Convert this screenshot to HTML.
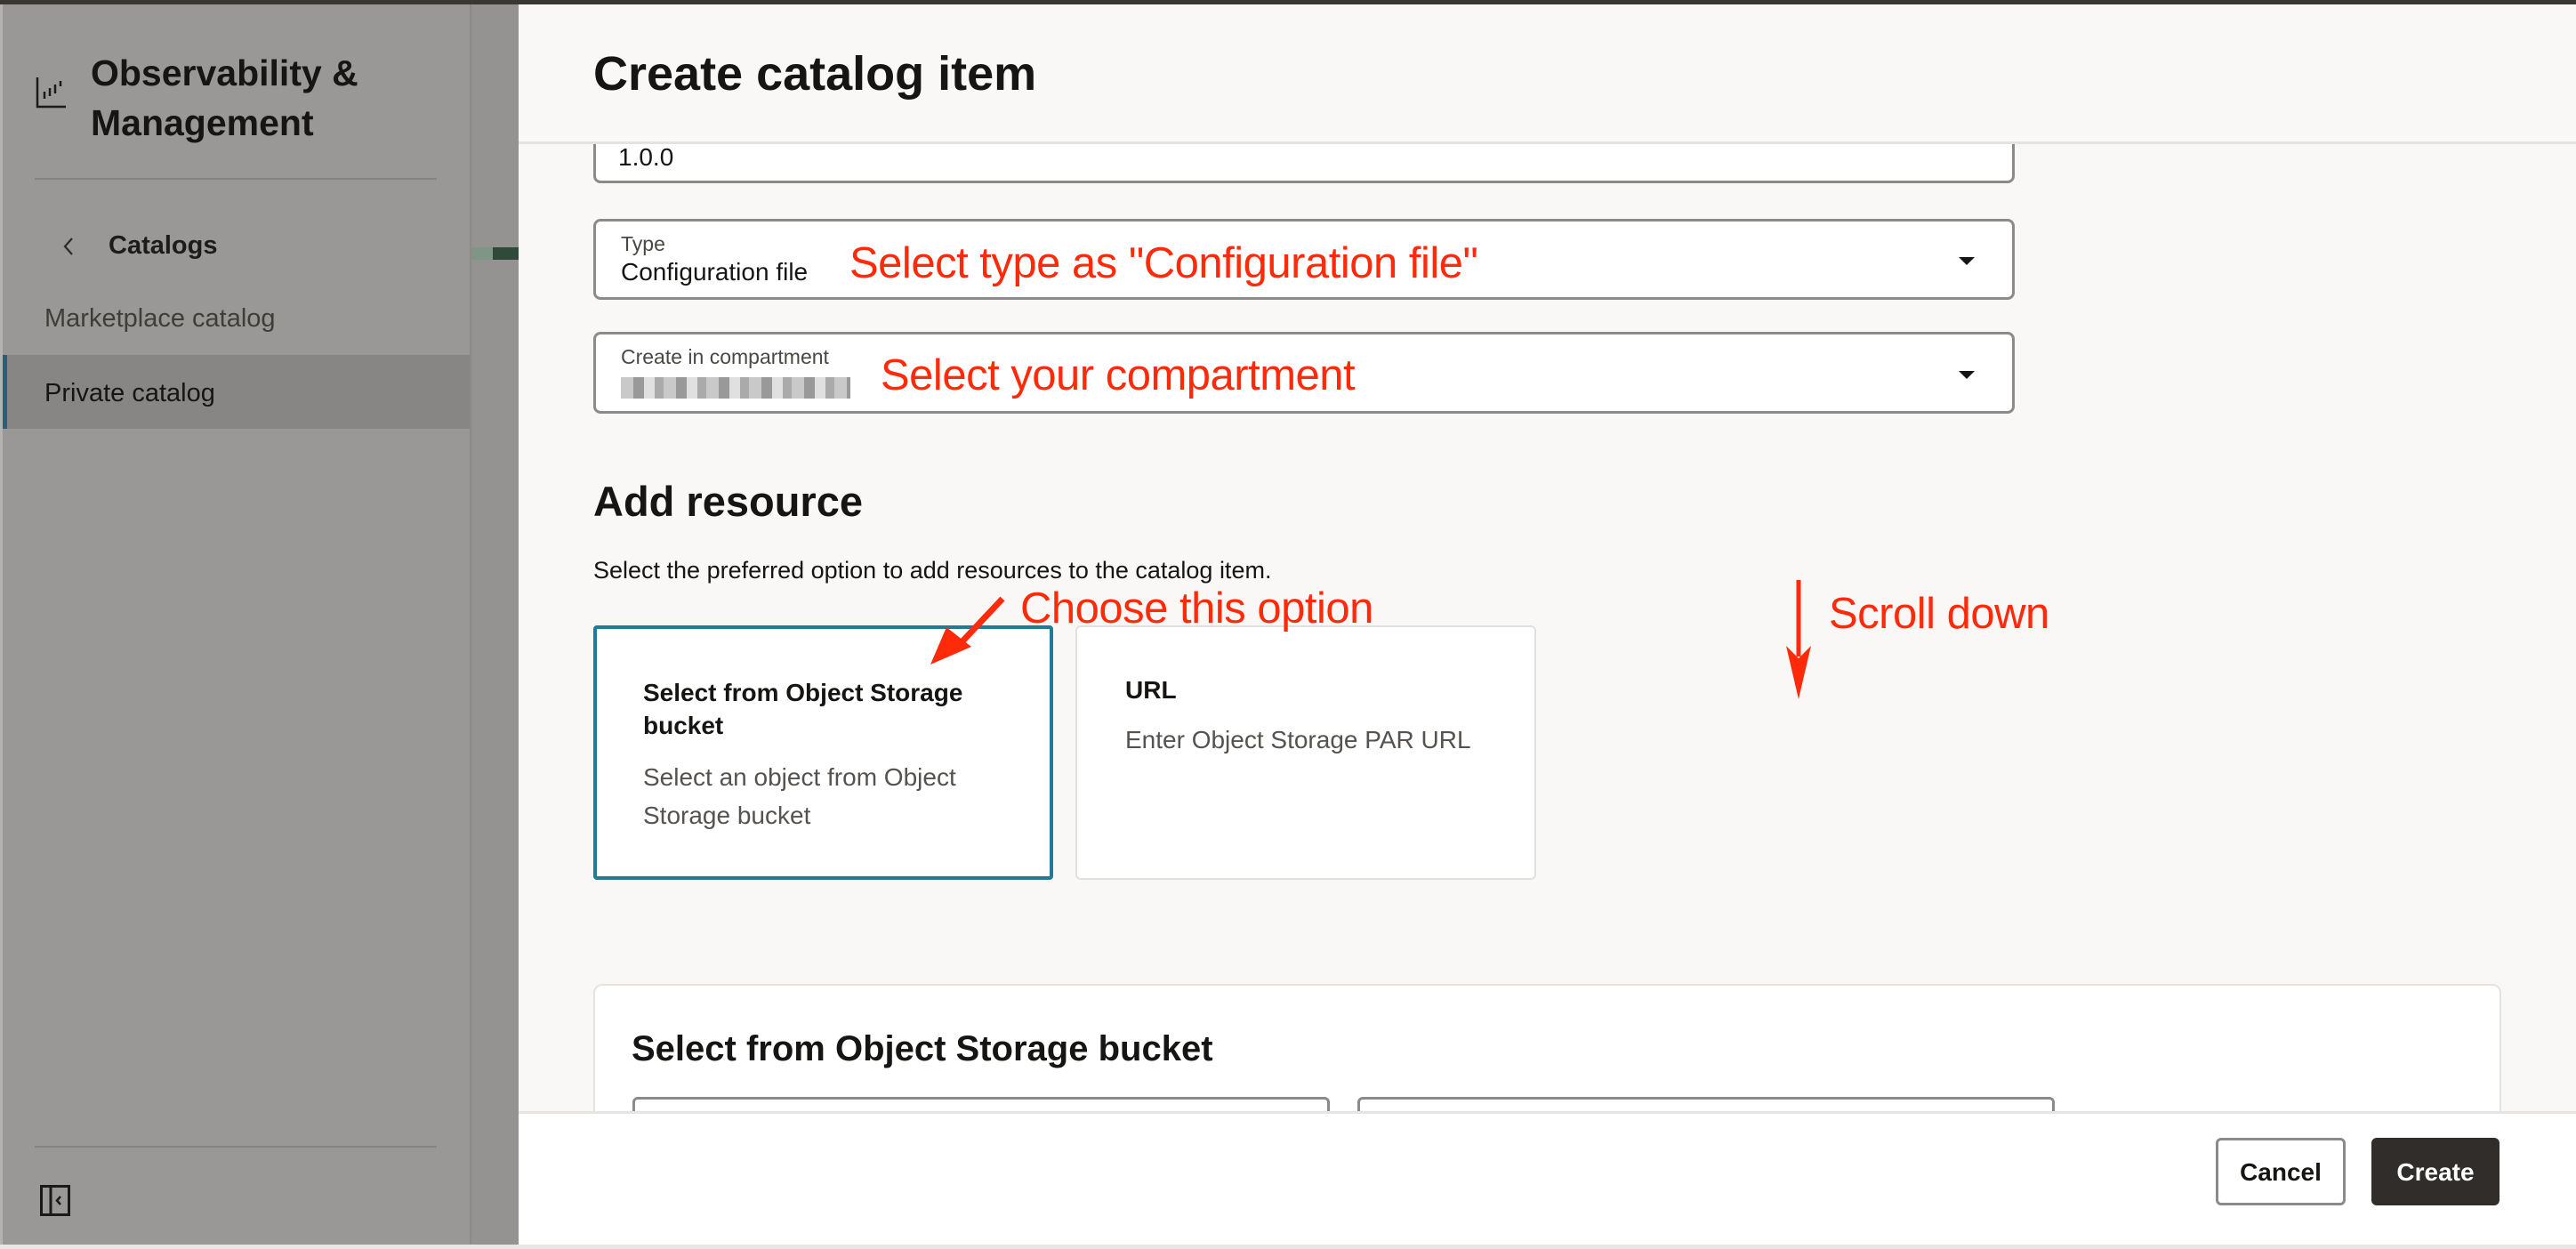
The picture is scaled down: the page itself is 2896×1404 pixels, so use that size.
<!DOCTYPE html>
<html><head><meta charset="utf-8"><style>
*{box-sizing:border-box;margin:0;padding:0}
body{width:2896px;height:1404px;position:relative;overflow:hidden;background:#f9f8f6;font-family:"Liberation Sans",sans-serif;color:#161513}
.a{position:absolute}
.red{color:#ff2a0a;font-size:49px;white-space:nowrap;letter-spacing:-0.5px}
.field{position:absolute;left:667px;width:1598px;background:#fff;border:3px solid #8b8b89;border-radius:8px}
.lbl{position:absolute;left:28px;font-size:23px;color:#4a4844}
.val{position:absolute;left:28px;font-size:28px;color:#161513}
.tri{position:absolute;right:42px;width:0;height:0;border-left:9px solid transparent;border-right:9px solid transparent;border-top:9px solid #161513}
</style></head><body>
<div class="a" style="left:0;top:0;width:2896px;height:5px;background:#3a3632"></div>
<div class="a" style="left:0;top:5px;width:528px;height:1395px;background:#9a9896;border-left:3px solid #b4b3b1"></div>
<div class="a" style="left:528px;top:5px;width:55px;height:1395px;background:#959391;border-left:2px solid #8c8a88"></div>
<div class="a" style="left:530px;top:278px;width:53px;height:14px;background:#7f9585"></div>
<div class="a" style="left:554px;top:278px;width:29px;height:14px;background:#2f4a38"></div>
<svg class="a" style="left:40px;top:85px" width="36" height="38" viewBox="0 0 36 38"><path d="M2 2V35H34" stroke="#1a1a1a" stroke-width="2.5" fill="none"/><path d="M10 18v8M16 14v9M22 10v10M28 6v6" stroke="#1a1a1a" stroke-width="2.5"/></svg>
<div class="a" style="left:102px;top:54px;font-size:41px;font-weight:bold;line-height:56px;color:#161513">Observability &amp;<br>Management</div>
<div class="a" style="left:39px;top:200px;width:452px;height:2px;background:#858381"></div>
<svg class="a" style="left:70px;top:266px" width="14" height="22" viewBox="0 0 14 22"><path d="M11 2L3 11l8 9" stroke="#2a2a2a" stroke-width="2.2" fill="none"/></svg>
<div class="a" style="left:122px;top:260px;font-size:29px;font-weight:bold;color:#1d1c1a">Catalogs</div>
<div class="a" style="left:50px;top:342px;font-size:29px;color:#3f3d3a">Marketplace catalog</div>
<div class="a" style="left:3px;top:399px;width:525px;height:83px;background:#878685;border-left:5px solid #2c5f73"></div>
<div class="a" style="left:50px;top:426px;font-size:29px;color:#161513">Private catalog</div>
<div class="a" style="left:39px;top:1288px;width:452px;height:2px;background:#858381"></div>
<svg class="a" style="left:45px;top:1332px" width="34" height="35" viewBox="0 0 34 35"><rect x="1.5" y="1.5" width="31" height="32" fill="none" stroke="#1a1a1a" stroke-width="3"/><path d="M12 2v31" stroke="#1a1a1a" stroke-width="3"/><path d="M23 13l-4 4.5 4 4.5" stroke="#1a1a1a" stroke-width="2.5" fill="none"/></svg>
<div class="a" style="left:583px;top:5px;width:2313px;height:1395px;background:#f9f8f6"></div>
<div class="a" style="left:667px;top:52px;font-size:54px;font-weight:bold;color:#161513">Create catalog item</div>
<div class="field" style="top:162px;height:44px;border-top:none;border-radius:0 0 8px 8px"></div>
<div class="a" style="left:695px;top:161px;font-size:28px">1.0.0</div>
<div class="a" style="left:583px;top:159px;width:2313px;height:3px;background:#e4e3e1"></div>
<div class="field" style="top:246px;height:91px">
<div class="lbl" style="top:12px">Type</div>
<div class="val" style="top:41px">Configuration file</div>
<div class="tri" style="top:40px"></div></div>
<div class="a red" style="left:955px;top:268px">Select type as "Configuration file"</div>
<div class="field" style="top:373px;height:92px">
<div class="lbl" style="top:12px">Create in compartment</div>
<div class="a" style="left:28px;top:48px;width:258px;height:24px;background:repeating-linear-gradient(90deg,#c9c9c9 0 14px,#999 14px 26px,#e0e0e0 26px 38px,#aaa 38px 48px)"></div>
<div class="tri" style="top:41px"></div></div>
<div class="a red" style="left:990px;top:394px">Select your compartment</div>
<div class="a" style="left:667px;top:536px;font-size:47px;font-weight:bold">Add resource</div>
<div class="a" style="left:667px;top:626px;font-size:27px">Select the preferred option to add resources to the catalog item.</div>
<div class="a" style="left:667px;top:703px;width:517px;height:286px;background:#fff;border:4px solid #227a96;border-radius:4px"></div>
<div class="a" style="left:723px;top:760px;font-size:28px;font-weight:bold;line-height:37px;width:420px">Select from Object Storage<br>bucket</div>
<div class="a" style="left:723px;top:852px;font-size:28px;color:#55524f;line-height:43px">Select an object from Object<br>Storage bucket</div>
<div class="a" style="left:1209px;top:703px;width:518px;height:286px;background:#fff;border:2px solid #e2e1df;border-radius:6px"></div>
<div class="a" style="left:1265px;top:760px;font-size:28px;font-weight:bold">URL</div>
<div class="a" style="left:1265px;top:816px;font-size:28px;color:#55524f">Enter Object Storage PAR URL</div>
<div class="a red" style="left:1147px;top:656px">Choose this option</div>
<svg class="a" style="left:1030px;top:665px" width="110" height="95" viewBox="0 0 110 95"><path d="M97 8L50 58" stroke="#ff2a0a" stroke-width="7"/><path d="M16 82L34 40L62 62Z" fill="#ff2a0a"/></svg>
<div class="a red" style="left:2056px;top:662px">Scroll down</div>
<svg class="a" style="left:1998px;top:648px" width="48" height="142" viewBox="0 0 48 142"><path d="M24 4V90" stroke="#ff2a0a" stroke-width="5"/><path d="M10 78L24 138L38 78L24 92Z" fill="#ff2a0a"/></svg>
<div class="a" style="left:667px;top:1106px;width:2145px;height:200px;background:#fff;border:2px solid #e4e3e1;border-radius:10px"></div>
<div class="a" style="left:710px;top:1157px;font-size:40px;font-weight:bold">Select from Object Storage bucket</div>
<div class="a" style="left:711px;top:1233px;width:784px;height:40px;background:#fff;border:3px solid #8b8b89;border-radius:6px"></div>
<div class="a" style="left:1526px;top:1233px;width:784px;height:40px;background:#fff;border:3px solid #8b8b89;border-radius:6px"></div>
<div class="a" style="left:583px;top:1249px;width:2313px;height:150px;background:#fff;border-top:3px solid #e6e5e3"></div>
<div class="a" style="left:2491px;top:1279px;width:146px;height:76px;background:#fff;border:3px solid #8b8b89;border-radius:6px;font-size:28px;font-weight:bold;text-align:center;line-height:72px">Cancel</div>
<div class="a" style="left:2666px;top:1279px;width:144px;height:76px;background:#312d2a;border-radius:6px;font-size:28px;font-weight:bold;color:#fff;text-align:center;line-height:78px">Create</div>
<div class="a" style="left:0;top:1399px;width:2896px;height:5px;background:#e8e7e5"></div>
</body></html>
